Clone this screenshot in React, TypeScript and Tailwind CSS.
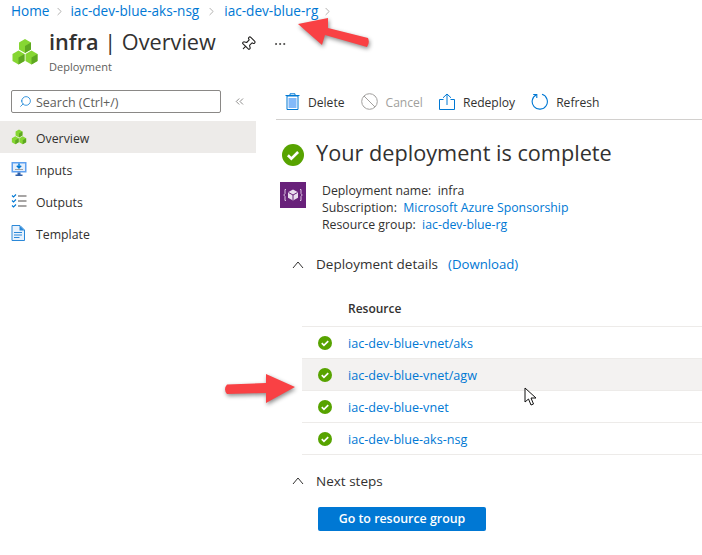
// App.tsx - deployment overview blade
import React from 'react';
import { ChevronRight, ChevronsLeft, MoreHorizontal, Pin, Search } from 'lucide-react';

const resources = ['iac-dev-blue-vnet/aks', 'iac-dev-blue-vnet/agw', 'iac-dev-blue-vnet', 'iac-dev-blue-aks-nsg'];

const Cubes: React.FC<{ size: number }> = ({ size }) => (
  <svg width={size} height={size} viewBox="0 0 28 28">
    <path d="M14 1l6 3.500v7L14 15l-6-3.500v-7z" fill="#86d633" />
    <path d="M14 8l6-3.500v7L14 15z" fill="#5ea821" />
    <path d="M7.500 12.500l6 3.500v7l-6 3.500-6-3.500v-7z" fill="#86d633" />
    <path d="M7.500 19.500l6-3.500v7l-6 3.500z" fill="#5ea821" />
    <path d="M20.500 12.500l6 3.500v7l-6 3.500-6-3.500v-7z" fill="#86d633" />
    <path d="M20.500 19.500l6-3.500v7l-6 3.500z" fill="#5ea821" />
  </svg>
);

const InputsIcon = () => (
  <svg width="16" height="16" viewBox="0 0 16 16">
    <rect x="0.500" y="1" width="15" height="10.500" fill="#5ea0ef" />
    <rect x="2" y="2.500" width="12" height="7.500" fill="#e4eefb" />
    <path d="M8 2.500v4M5.800 4.800L8 7l2.200-2.200" stroke="#0078d4" strokeWidth="1.500" fill="none" />
    <path d="M4 8.500h8" stroke="#a0a0a0" />
    <path d="M6.500 11.500h3v2h2v1.500h-7v-1.500h2z" fill="#2f5fa8" />
  </svg>
);

const OutputsIcon = () => (
  <svg width="16" height="16" viewBox="0 0 16 16" fill="none">
    <path d="M1 2.500l1.500 1.500L5 1.500M1 7.500L2.500 9 5 6.500M1 12.500L2.500 14 5 11.500" stroke="#0078d4" strokeWidth="1.100" />
    <path d="M7 3h8.500M7 8h8.500M7 13h8.500" stroke="#8a8886" strokeWidth="1.300" />
  </svg>
);

const TemplateIcon = () => (
  <svg width="14" height="16" viewBox="0 0 14 16">
    <path d="M1 .5h8l4.500 4.500v10.500H1z" fill="#e8f2fd" stroke="#2b88d8" />
    <path d="M8.500 .5v5h5z" fill="#2b88d8" />
    <path d="M3 7.500h8M3 10h8M3 12.500h5.500" stroke="#2b88d8" />
  </svg>
);

const CheckCircle: React.FC<{ size: number }> = ({ size }) => (
  <svg width={size} height={size} viewBox="0 0 16 16">
    <circle cx="8" cy="8" r="8" fill="#57a300" />
    <path d="M4.300 8.200l2.500 2.500 4.900-4.900" stroke="#fff" strokeWidth="1.900" fill="none" />
  </svg>
);

const DeleteIcon = () => (
  <svg width="15" height="17" viewBox="0 0 15 17">
    <path d="M0.500 2.500h14M5 2.500V.8h5v1.700" stroke="#0078d4" fill="none" />
    <path d="M2 3h11v13.500H2z" fill="none" stroke="#0078d4" />
    <rect x="3.500" y="5" width="8" height="10" fill="#83b9f9" />
  </svg>
);

const CancelIcon = () => (
  <svg width="17" height="17" viewBox="0 0 17 17" fill="none" stroke="#a19f9d">
    <circle cx="8.500" cy="8.500" r="7.800" />
    <path d="M3 3l11 11" />
  </svg>
);

const RedeployIcon = () => (
  <svg width="16" height="17" viewBox="0 0 16 17" fill="none" stroke="#0078d4">
    <path d="M4.500 6.500H.5v10h15v-10h-4" />
    <path d="M8 12V1M4 4.800L8 1l4 3.800" />
  </svg>
);

const RefreshIcon = () => (
  <svg width="17" height="17" viewBox="0 0 17 17" fill="none" stroke="#0078d4">
    <path d="M5.500 1.700A7.600 7.600 0 1 0 11 1.300" strokeWidth="1.100" />
    <path d="M5.800 5V1.500H2.200" strokeWidth="1.100" />
  </svg>
);

const CollapseIcon = () => (
  <svg width="12" height="8" viewBox="0 0 12 8" fill="none" stroke="#323130" strokeWidth="1">
    <path d="M1 7l5-6 5 6" />
  </svg>
);

const TemplateBadge = () => (
  <div className="w-[26px] h-[26px] bg-[#68217a] flex items-center justify-center">
    <svg width="20" height="14" viewBox="0 0 20 14" fill="none">
      <path d="M3 1.500H2v4L.8 7 2 8.500v4h1M17 1.500h1v4L19.200 7 18 8.500v4h-1" stroke="#d9c3e0" />
      <path d="M10 1.500l5 2.700v5.600l-5 2.700-5-2.700V4.200z" fill="#e9dcee" />
      <path d="M5.500 4.500L10 7l4.500-2.500M10 7v5" stroke="#68217a" />
    </svg>
  </div>
);

const arrowShadow = { filter: 'drop-shadow(1px 2px 2px rgba(0,0,0,0.45))' };

const NavItem: React.FC<{ label: string; active?: boolean; icon: React.ReactNode }> = ({ label, active, icon }) => (
  <div className={`h-8 flex items-center pl-[11px] ${active ? 'bg-[#edebe9]' : ''}`}>
    <span className="w-[25px] flex items-center">{icon}</span>
    <span className="pt-[4px] text-[12.300px] text-[#323130]">{label}</span>
  </div>
);

const ToolbarButton: React.FC<{ label: string; icon: React.ReactNode; disabled?: boolean }> = ({ label, icon, disabled }) => (
  <div className="flex items-center gap-[8px]">
    {icon}
    <span className={`pt-[2px] text-[12.100px] ${disabled ? 'text-[#a19f9d]' : 'text-[#323130]'}`}>{label}</span>
  </div>
);

const App: React.FC = () => {
  return (
    <div className="relative w-[702px] h-[555px] overflow-hidden bg-white text-[#323130] font-['Open_Sans','Liberation_Sans',sans-serif]">
      {/* breadcrumb */}
      <div className="h-[22px] pl-[11px] flex items-center text-[13.600px] text-[#0078d4]">
        <span>Home</span>
        <ChevronRight className="w-[13px] h-[13px] text-[#8a8886] mx-[4px]" strokeWidth={1.200} />
        <span>iac-dev-blue-aks-nsg</span>
        <ChevronRight className="w-[13px] h-[13px] text-[#8a8886] mx-[6px]" strokeWidth={1.200} />
        <span>iac-dev-blue-rg</span>
        <ChevronRight className="w-[13px] h-[13px] text-[#8a8886] mx-[3px]" strokeWidth={1.200} />
      </div>

      {/* title */}
      <div className="h-[58px] flex pl-[11px]">
        <div className="w-[38px] pt-[16px]">
          <Cubes size={28} />
        </div>
        <div className="w-[181px] pt-[5px]">
          <div className="text-[21.700px] leading-[30px] text-[#323130] whitespace-nowrap">
            <span className="font-semibold">infra</span> | Overview
          </div>
          <div className="text-[11px] leading-[16px] text-[#605e5c] mt-[2px]">Deployment</div>
        </div>
        <Pin className="w-[16px] h-[16px] mt-[14px] ml-[10px] rotate-45 text-[#201f1e]" strokeWidth={1.600} />
        <MoreHorizontal className="w-[14px] h-[14px] mt-[15px] ml-[17px] text-[#323130]" strokeWidth={1.400} />
      </div>

      <div className="flex">
        {/* sidebar */}
        <div className="w-[256px] shrink-0">
          <div className="flex items-center pl-[11px] pt-[10px] mb-[8px]">
            <div className="w-[210px] h-[23px] border border-[#8a8886] rounded-[2px] flex items-center pl-[7px]">
              <Search className="w-[13px] h-[13px] text-[#0078d4] -scale-x-100" strokeWidth={1.400} />
              <span className="ml-[4px] pt-[3px] text-[12.500px] text-[#605e5c]">Search (Ctrl+/)</span>
            </div>
            <ChevronsLeft className="w-[13px] h-[13px] ml-[12px] text-[#605e5c]" strokeWidth={1.300} />
          </div>
          <NavItem label="Overview" active icon={<Cubes size={16} />} />
          <NavItem label="Inputs" icon={<InputsIcon />} />
          <NavItem label="Outputs" icon={<OutputsIcon />} />
          <NavItem label="Template" icon={<TemplateIcon />} />
        </div>

        {/* main */}
        <div className="flex-1 pl-[20px]">
          <div className="h-[40px] pt-[5px] pl-[9px] flex items-center gap-[16px] border-b border-[#d2d0ce]">
            <ToolbarButton label="Delete" icon={<DeleteIcon />} />
            <ToolbarButton label="Cancel" disabled icon={<CancelIcon />} />
            <ToolbarButton label="Redeploy" icon={<RedeployIcon />} />
            <ToolbarButton label="Refresh" icon={<RefreshIcon />} />
          </div>

          <div className="flex items-center mt-[22px] pl-[6px] h-[26px]">
            <CheckCircle size={22} />
            <span className="ml-[12px] pb-[3px] text-[21.700px] text-[#323130] whitespace-nowrap">Your deployment is complete</span>
          </div>

          <div className="flex mt-[14px] pl-[4px]">
            <TemplateBadge />
            <div className="ml-[16px] text-[12.300px] leading-[17px] text-[#323130] whitespace-nowrap">
              <div>Deployment name:&nbsp; infra</div>
              <div>Subscription:&nbsp; <span className="text-[#0078d4]">Microsoft Azure Sponsorship</span></div>
              <div>Resource group:&nbsp; <span className="text-[#0078d4]">iac-dev-blue-rg</span></div>
            </div>
          </div>

          <div className="flex items-center mt-[22px] pl-[16px] h-[20px]">
            <CollapseIcon />
            <span className="ml-[12px] pb-[2px] text-[13.500px] font-medium text-[#323130]">Deployment details</span>
            <span className="ml-[10px] text-[13.200px] text-[#0078d4]">(Download)</span>
          </div>

          <div className="ml-[26px] mt-[17px]">
            <div className="h-[35px] pl-[46px] flex items-center text-[12px] font-semibold text-[#323130] border-b border-[#edebe9]">Resource</div>
            {resources.map((name, i) => (
              <div key={name} className={`h-[32px] flex items-center pl-[16px] border-b border-[#edebe9] ${i === 1 ? 'bg-[#f3f2f1]' : ''}`}>
                <CheckCircle size={14} />
                <span className="ml-[16px] pt-[3px] text-[12.600px] text-[#0078d4]">{name}</span>
              </div>
            ))}
          </div>

          <div className="flex items-center mt-[16px] pl-[16px] h-[20px]">
            <CollapseIcon />
            <span className="ml-[12px] text-[13.500px] font-medium text-[#323130]">Next steps</span>
          </div>

          <div className="ml-[42px] mt-[16px] w-[168px] h-[24px] bg-[#0078d4] rounded-[2px] flex items-center justify-center text-[12.400px] font-semibold text-white">
            Go to resource group
          </div>
        </div>
      </div>

      {/* screenshot annotations */}
      <svg className="absolute left-[215px] top-[365px]" width="90" height="50" viewBox="0 0 90 50" style={arrowShadow}>
        <path d="M12 19.500L51 18 51 9 80 22 51 38 51 28 12 29Q8 24 12 19.500z" fill="#f94144" />
      </svg>
      <svg className="absolute left-[290px] top-[10px]" width="90" height="50" viewBox="0 0 90 50" style={arrowShadow}>
        <path d="M8 14L38 8 38 18 78 28Q80 33 77 37L35 25 32 35z" fill="#f94144" />
      </svg>
      <svg className="absolute left-[524px] top-[387px]" width="13" height="20" viewBox="0 0 13 20">
        <path d="M1 1v14l3.500-3 2.500 6 2.500-1-2.500-6h5z" fill="#fff" stroke="#111" strokeWidth="1" />
      </svg>
    </div>
  );
};

export default App;
